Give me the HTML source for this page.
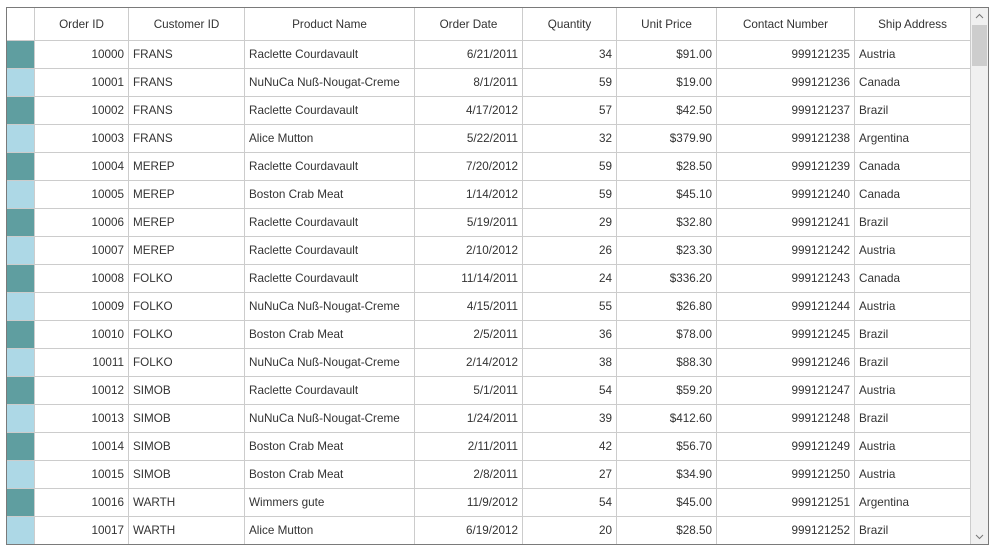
<!DOCTYPE html>
<html><head><meta charset="utf-8"><style>
html,body{margin:0;padding:0;background:#fff;width:992px;height:550px;overflow:hidden}
#f{position:absolute;left:6px;top:7px;width:981px;height:536px;border:1px solid #7a7a7a;overflow:hidden;background:#fff}
table{position:absolute;left:0;top:0;border-collapse:separate;border-spacing:0;table-layout:fixed;font-family:"Liberation Sans",sans-serif;font-size:11.7px;color:#333}
td,th{box-sizing:border-box;border-right:1px solid #ccc;border-bottom:1px solid #ccc;padding:0 4px;white-space:nowrap;overflow:hidden;height:28px}
td{padding-bottom:0}
th{font-weight:normal;height:33px;text-align:center;padding-bottom:0}
td.r{text-align:right}
td.d{background:#5f9ea0;padding:0}
td.l{background:#add8e6;padding:0}
#sb{position:absolute;left:964px;top:0;width:17px;height:536px;background:#f0f0f0}
#th{position:absolute;left:1px;top:17px;width:15px;height:41px;background:#cdcdcd}
</style></head><body><div id="f">
<table>
<colgroup><col style="width:28px"><col style="width:94px"><col style="width:116px"><col style="width:170px"><col style="width:108px"><col style="width:94px"><col style="width:100px"><col style="width:138px"><col style="width:116px"></colgroup>
<tr><th></th><th>Order ID</th><th>Customer ID</th><th>Product Name</th><th>Order Date</th><th>Quantity</th><th>Unit Price</th><th>Contact Number</th><th>Ship Address</th></tr>
<tr><td class="d"></td><td class="r">10000</td><td>FRANS</td><td>Raclette Courdavault</td><td class="r">6/21/2011</td><td class="r">34</td><td class="r">$91.00</td><td class="r">999121235</td><td>Austria</td></tr>
<tr><td class="l"></td><td class="r">10001</td><td>FRANS</td><td>NuNuCa Nuß-Nougat-Creme</td><td class="r">8/1/2011</td><td class="r">59</td><td class="r">$19.00</td><td class="r">999121236</td><td>Canada</td></tr>
<tr><td class="d"></td><td class="r">10002</td><td>FRANS</td><td>Raclette Courdavault</td><td class="r">4/17/2012</td><td class="r">57</td><td class="r">$42.50</td><td class="r">999121237</td><td>Brazil</td></tr>
<tr><td class="l"></td><td class="r">10003</td><td>FRANS</td><td>Alice Mutton</td><td class="r">5/22/2011</td><td class="r">32</td><td class="r">$379.90</td><td class="r">999121238</td><td>Argentina</td></tr>
<tr><td class="d"></td><td class="r">10004</td><td>MEREP</td><td>Raclette Courdavault</td><td class="r">7/20/2012</td><td class="r">59</td><td class="r">$28.50</td><td class="r">999121239</td><td>Canada</td></tr>
<tr><td class="l"></td><td class="r">10005</td><td>MEREP</td><td>Boston Crab Meat</td><td class="r">1/14/2012</td><td class="r">59</td><td class="r">$45.10</td><td class="r">999121240</td><td>Canada</td></tr>
<tr><td class="d"></td><td class="r">10006</td><td>MEREP</td><td>Raclette Courdavault</td><td class="r">5/19/2011</td><td class="r">29</td><td class="r">$32.80</td><td class="r">999121241</td><td>Brazil</td></tr>
<tr><td class="l"></td><td class="r">10007</td><td>MEREP</td><td>Raclette Courdavault</td><td class="r">2/10/2012</td><td class="r">26</td><td class="r">$23.30</td><td class="r">999121242</td><td>Austria</td></tr>
<tr><td class="d"></td><td class="r">10008</td><td>FOLKO</td><td>Raclette Courdavault</td><td class="r">11/14/2011</td><td class="r">24</td><td class="r">$336.20</td><td class="r">999121243</td><td>Canada</td></tr>
<tr><td class="l"></td><td class="r">10009</td><td>FOLKO</td><td>NuNuCa Nuß-Nougat-Creme</td><td class="r">4/15/2011</td><td class="r">55</td><td class="r">$26.80</td><td class="r">999121244</td><td>Austria</td></tr>
<tr><td class="d"></td><td class="r">10010</td><td>FOLKO</td><td>Boston Crab Meat</td><td class="r">2/5/2011</td><td class="r">36</td><td class="r">$78.00</td><td class="r">999121245</td><td>Brazil</td></tr>
<tr><td class="l"></td><td class="r">10011</td><td>FOLKO</td><td>NuNuCa Nuß-Nougat-Creme</td><td class="r">2/14/2012</td><td class="r">38</td><td class="r">$88.30</td><td class="r">999121246</td><td>Brazil</td></tr>
<tr><td class="d"></td><td class="r">10012</td><td>SIMOB</td><td>Raclette Courdavault</td><td class="r">5/1/2011</td><td class="r">54</td><td class="r">$59.20</td><td class="r">999121247</td><td>Austria</td></tr>
<tr><td class="l"></td><td class="r">10013</td><td>SIMOB</td><td>NuNuCa Nuß-Nougat-Creme</td><td class="r">1/24/2011</td><td class="r">39</td><td class="r">$412.60</td><td class="r">999121248</td><td>Brazil</td></tr>
<tr><td class="d"></td><td class="r">10014</td><td>SIMOB</td><td>Boston Crab Meat</td><td class="r">2/11/2011</td><td class="r">42</td><td class="r">$56.70</td><td class="r">999121249</td><td>Austria</td></tr>
<tr><td class="l"></td><td class="r">10015</td><td>SIMOB</td><td>Boston Crab Meat</td><td class="r">2/8/2011</td><td class="r">27</td><td class="r">$34.90</td><td class="r">999121250</td><td>Austria</td></tr>
<tr><td class="d"></td><td class="r">10016</td><td>WARTH</td><td>Wimmers gute</td><td class="r">11/9/2012</td><td class="r">54</td><td class="r">$45.00</td><td class="r">999121251</td><td>Argentina</td></tr>
<tr><td class="l"></td><td class="r">10017</td><td>WARTH</td><td>Alice Mutton</td><td class="r">6/19/2012</td><td class="r">20</td><td class="r">$28.50</td><td class="r">999121252</td><td>Brazil</td></tr>
</table>
<div id="sb"><div id="th"></div>
<svg style="position:absolute;left:4px;top:5px" width="9" height="6"><path d="M1 5L4.5 1.5L8 5" fill="none" stroke="#777" stroke-width="1"/></svg>
<svg style="position:absolute;left:4px;top:526px" width="9" height="6"><path d="M1 1L4.5 4.5L8 1" fill="none" stroke="#777" stroke-width="1"/></svg>
</div>
</div></body></html>
